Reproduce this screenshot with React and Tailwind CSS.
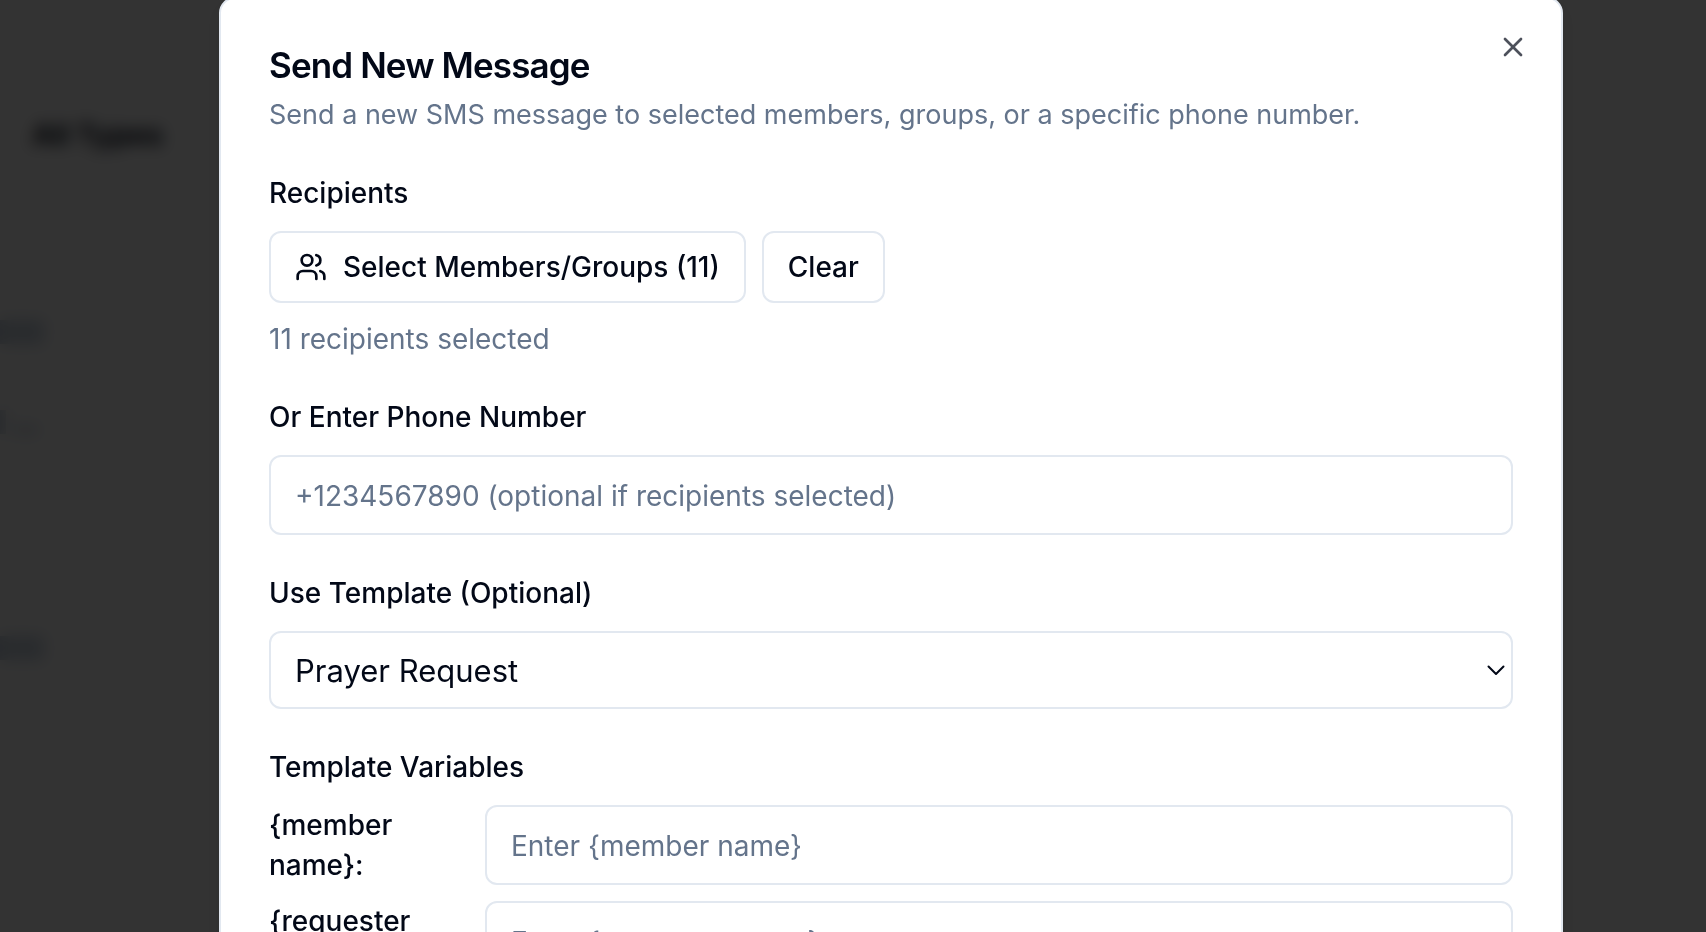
import { X } from "lucide-react";

const fieldClass =
  "w-full min-w-0 rounded-[12px] border-2 border-[#e2e8f0] bg-white px-6 pt-0.5 text-[#020817] placeholder:text-[#64748b] outline-none";

const labelClass = "block text-[28px] leading-[52px] font-medium";

const buttonClass =
  "flex h-[72px] items-center gap-4 rounded-[12px] border-2 border-[#e2e8f0] bg-white px-6 text-[28px] leading-10 font-medium";

const variables = ["member name", "requester name"];

function UsersIcon() {
  return (
    <svg
      className="size-8 shrink-0"
      viewBox="0 0 24 24"
      fill="none"
      stroke="currentColor"
      strokeWidth="2"
      strokeLinecap="round"
      strokeLinejoin="round"
      aria-hidden="true"
    >
      <path d="M16 21v-2a4 4 0 0 0-4-4H6a4 4 0 0 0-4 4v2" />
      <circle cx="9" cy="7" r="4" />
      <path d="M22 21v-2a4 4 0 0 0-3-3.87" />
      <path d="M16 3.13a4 4 0 0 1 0 7.75" />
    </svg>
  );
}

function Backdrop() {
  return (
    <div className="fixed inset-0 overflow-hidden bg-white" aria-hidden="true">
      <div className="flex flex-col items-start pt-[115px]">
        <span className="ml-8 text-[29px] leading-10 font-bold text-[#020817]">All Types</span>
        <div className="mt-[165px] h-6 w-11 bg-slate-300" />
        <div className="mt-[66px] flex items-end gap-2">
          <div className="h-6 w-1.5 bg-slate-300" />
          <div className="h-2 w-6 bg-slate-300" />
        </div>
        <div className="mt-[202px] h-6 w-11 bg-slate-300" />
      </div>
      <div className="absolute inset-0 bg-black/80 backdrop-blur-[8px]" />
    </div>
  );
}

export default function App() {
  return (
    <div className="font-['Inter',sans-serif] text-[#020817]">
      <Backdrop />
      <div className="fixed inset-0 flex items-start overflow-hidden pr-[143px] pl-[219px]">
        <div
          role="dialog"
          aria-modal="true"
          aria-labelledby="dialog-title"
          aria-describedby="dialog-description"
          className="relative -mt-[3px] flex min-w-0 flex-1 flex-col gap-8 rounded-[16px] border-2 border-[#e2e8f0] bg-white p-12 shadow-lg"
        >
          <header className="flex flex-col gap-3">
            <h2 id="dialog-title" className="text-[35px] leading-9 font-semibold tracking-tight">
              Send New Message
            </h2>
            <p id="dialog-description" className="text-[27px] leading-10 text-[#64748b]">
              Send a new SMS message to selected members, groups, or a specific phone number.
            </p>
          </header>

          <section className="flex flex-col">
            <h3 className={labelClass}>Recipients</h3>
            <div className="mt-3 flex gap-4">
              <button type="button" className={buttonClass}>
                <UsersIcon />
                Select Members/Groups (11)
              </button>
              <button type="button" className={buttonClass}>
                Clear
              </button>
            </div>
            <p className="mt-4 text-[28px] leading-10 text-[#64748b]">11 recipients selected</p>
          </section>

          <div className="flex flex-col gap-3">
            <label htmlFor="phone" className={labelClass}>
              Or Enter Phone Number
            </label>
            <input
              id="phone"
              type="tel"
              placeholder="+1234567890 (optional if recipients selected)"
              className={`${fieldClass} h-20 text-[28px]`}
            />
          </div>

          <div className="flex flex-col gap-3">
            <label htmlFor="template" className={labelClass}>
              Use Template (Optional)
            </label>
            <div className="relative">
              <select
                id="template"
                defaultValue="prayer"
                className={`${fieldClass} block h-[78px] appearance-none text-[31px]`}
              >
                <option value="prayer">Prayer Request</option>
              </select>
              <svg
                className="pointer-events-none absolute top-8 right-2 h-[14px] w-5"
                viewBox="0 0 20 14"
                fill="none"
                stroke="currentColor"
                strokeWidth="2"
                strokeLinecap="round"
                strokeLinejoin="round"
                aria-hidden="true"
              >
                <path d="M3.5 3.5 11 11l7.5-7.5" />
              </svg>
            </div>
          </div>

          <section className="flex flex-col">
            <h3 className={labelClass}>Template Variables</h3>
            <div className="mt-3 flex flex-col gap-4">
              {variables.map((name, i) => (
                <div key={name} className="flex items-center gap-6">
                  <label htmlFor={`variable-${i}`} className="w-48 shrink-0 text-[28px] leading-10 font-medium">
                    {`{${name}}:`}
                  </label>
                  <input
                    id={`variable-${i}`}
                    type="text"
                    placeholder={`Enter {${name}}`}
                    className={`${fieldClass} h-20 text-[28px]`}
                  />
                </div>
              ))}
            </div>
          </section>

          <button type="button" aria-label="Close" className="absolute top-8 right-8 opacity-70">
            <X className="size-8" aria-hidden="true" />
          </button>
        </div>
      </div>
    </div>
  );
}
